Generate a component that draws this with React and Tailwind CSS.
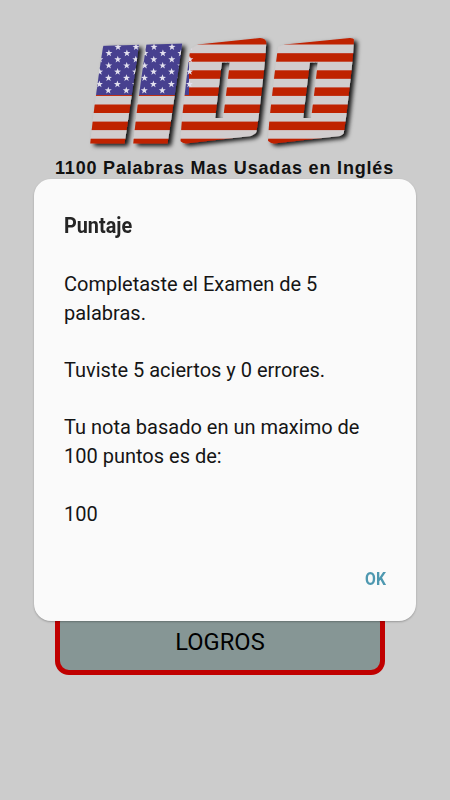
import React from 'react';

const STRIPES = [36, 53.2, 70.3, 87.4, 104.5, 121.6, 138.7];
const STAR_ROWS = [47, 53.2, 59.4, 65.6, 71.8, 78, 84.2, 90.4];

const STAR = 'M0 -3.7 L0.9 -1.2 3.5 -1.1 1.4 0.5 2.2 3 0 1.5 -2.2 3 -1.4 0.5 -3.5 -1.1 -0.9 -1.2Z';

const Flag = () => (
  <>
    <rect x="80" y="30" width="290" height="120" fill="#d1cdce" />
    {STRIPES.map((y) => (
      <rect key={y} x="80" y={y} width="290" height="8.5" fill="#bf2000" />
    ))}
    <rect x="80" y="30" width="109" height="65" fill="#46418f" />
    {STAR_ROWS.map((y, row) =>
      [0, 1, 2, 3, 4, 5].map((col) => (
        <path
          key={`${row}-${col}`}
          d={STAR}
          fill="#e3e0ee"
          transform={`translate(${(row % 2 ? 91 : 100) + col * 18 - row * 0.1} ${y})`}
        />
      ))
    )}
  </>
);

const Logo = () => (
  <svg width="450" height="155" viewBox="0 0 450 155" className="block" role="img" aria-label="1100">
    <defs>
      {/* slanted band that trims the top and bottom of the digits */}
      <clipPath id="band">
        <path d="M80 46.5L186 43.5V52L198 44.5 260 38Q266 38 267 44L270 50 285 44.5 350 38Q356 38 356.500 45L350 122Q348 132 340 136L274 143.500Q267 143 265 135L262 122Q260 132 251 136L186 143.500Q179 143 177.500 136L172 143.500H80Z" />
      </clipPath>
      <clipPath id="slots">
        <rect x="200" y="62.5" width="130" height="55.5" />
      </clipPath>
      <mask id="digits" maskUnits="userSpaceOnUse" x="0" y="0" width="450" height="155">
        <g
          fill="white"
          stroke="white"
          strokeLinejoin="round"
          fontFamily="Roboto, sans-serif"
          fontSize="100"
          textAnchor="middle"
        >
          <text y="35.5" strokeWidth="330" transform="translate(114.500 94) skewX(-8.3) scale(0.1 1)">1</text>
          <text y="35.5" strokeWidth="330" transform="translate(157.500 94) skewX(-8.3) scale(0.1 1)">1</text>
          <text y="35.5" strokeWidth="22" fontWeight="900" transform="translate(223.500 90) skewX(-6.5) scale(1.07 2.8)">0</text>
          <text y="35.5" strokeWidth="22" fontWeight="900" transform="translate(311 90) skewX(-6.5) scale(1.07 2.8)">0</text>
        </g>
        {/* narrow counters of the zeros */}
        <g
          clipPath="url(#slots)"
          fontFamily="Roboto, sans-serif"
          fontSize="60"
          fill="black"
          stroke="black"
          textAnchor="middle"
        >
          <text y="21.3" strokeWidth="18" transform="translate(222.500 90.500) skewX(-6.9) scale(0.18 2.4)">0</text>
          <text y="21.3" strokeWidth="18" transform="translate(310.500 90.500) skewX(-6.9) scale(0.18 2.4)">0</text>
        </g>
      </mask>
      <filter id="shade" x="-10%" y="-10%" width="120%" height="125%">
        <feDropShadow dx="3.5" dy="2.5" stdDeviation="2.2" floodColor="#000" floodOpacity="0.9" />
      </filter>
    </defs>
    <g filter="url(#shade)">
      <g clipPath="url(#band)">
        <g mask="url(#digits)">
          <Flag />
        </g>
      </g>
    </g>
  </svg>
);

const ScoreDialog = () => (
  <div className="absolute inset-0 flex justify-center">
    <div className="mt-[179px] flex h-[442px] w-[382px] flex-col rounded-[17px] bg-[#fafafa] px-[30px] shadow-[0_1px_2px_rgba(0,0,0,0.25)]">
      <h2 className="mt-8 origin-left scale-x-[0.9] text-[22px] leading-[30px] font-bold text-[#252525]">Puntaje</h2>
      <div className="mt-[29px] text-[20px] leading-[28.7px] whitespace-pre text-[#151515]">
        <p>Completaste el Examen de 5</p>
        <p>palabras.</p>
        <p className="mt-[28.7px]">Tuviste 5 aciertos y 0 errores.</p>
        <p className="mt-[28.7px]">Tu nota basado en un maximo de</p>
        <p>100 puntos es de:</p>
        <p className="mt-[28.7px]">100</p>
      </div>
      <button className="mt-auto mb-[30px] origin-right scale-x-[0.87] self-end text-[18px] leading-6 font-bold text-[#4e98b0]">
        OK
      </button>
    </div>
  </div>
);

const App = () => {
  return (
    <div className="relative flex h-[800px] w-[450px] flex-col items-center overflow-hidden bg-[#cccccc] font-['Roboto',sans-serif]">
      <Logo />
      <h1 className="mr-px font-['Liberation_Sans',sans-serif] text-[18px] leading-[26px] font-bold tracking-[0.82px] whitespace-nowrap text-[#111]">
        1100 Palabras Mas Usadas en Inglés
      </h1>
      <button className="mt-[427px] mr-[10px] h-[67px] w-[330px] rounded-[14px] border-[5px] border-[#c00000] bg-[#869695] pt-[3px] text-[23.7px] text-black">
        LOGROS
      </button>
      <ScoreDialog />
    </div>
  );
};

export default App;
